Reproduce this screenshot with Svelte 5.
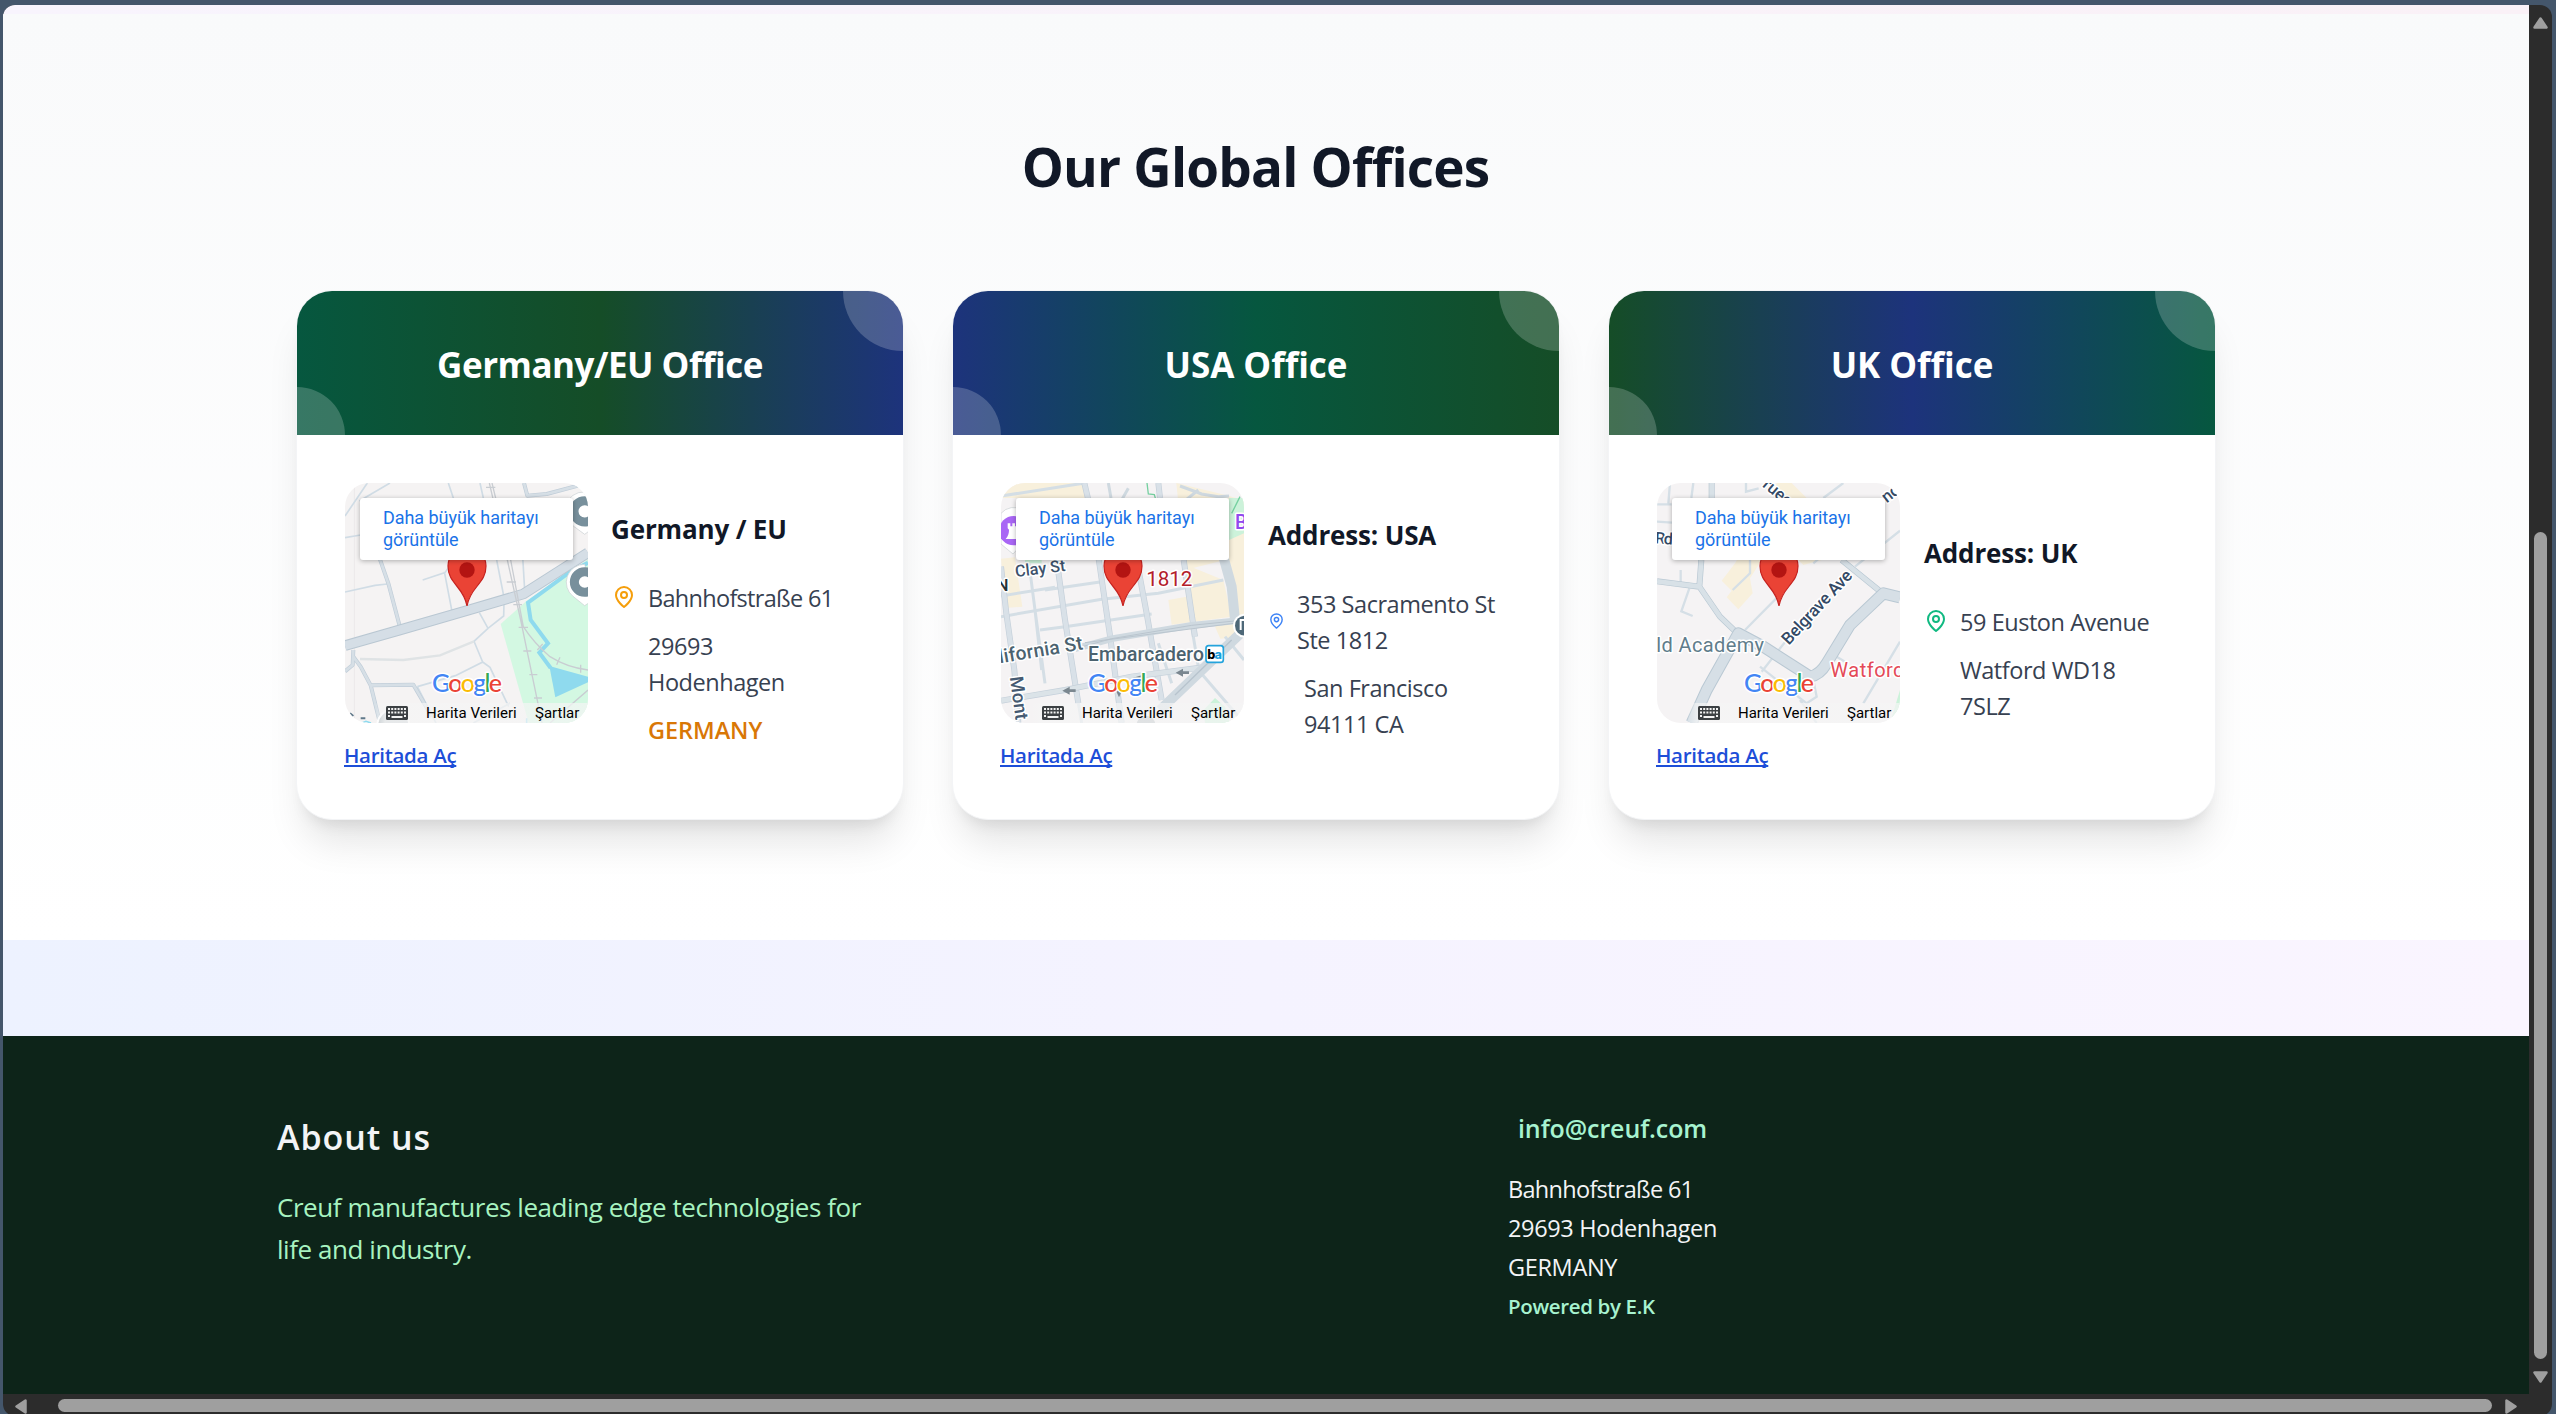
<script>
  const offices = [
    {
      id: 'de', title: 'Germany/EU Office', heading: 'Germany / EU',
      street: ['Bahnhofstraße 61'], city: ['29693', 'Hodenhagen'], country: 'GERMANY'
    },
    {
      id: 'us', title: 'USA Office', heading: 'Address: USA',
      street: ['353 Sacramento St', 'Ste 1812'], city: ['San Francisco', '94111 CA']
    },
    {
      id: 'uk', title: 'UK Office', heading: 'Address: UK',
      street: ['59 Euston Avenue'], city: ['Watford WD18', '7SLZ']
    }
  ];
</script>

{#snippet mapDe()}
  <svg class="tiles" viewBox="45 39 729 720">
    <rect x="45" y="39" width="729" height="720" fill="#f5f3f3" />
    <path d="M73 39V759" stroke="#ebe9ea" stroke-width="3" />
    <path d="M512 462L590 392 774 268V759H596Z" fill="#d3f8e2" />
    <g fill="none" stroke="#d0dce5" stroke-width="5">
      <path d="M45 138L112 39M88 93L180 39M45 203L92 195M45 366L135 346 172 342M278 330L345 308 357 290M343 305L366 424M355 39L372 90M450 39L460 84M498 260L522 382M578 260L584 360M522 400L521 438 474 475 448 428M474 475L432 514 458 576 376 617M458 576L480 592 536 710M376 617L262 650M262 650L318 759M430 759L540 700" />
    </g>
    <path d="M90 567L220 570 330 556 432 514" fill="none" stroke="#dfe3e5" stroke-width="7" />
    <g fill="none" stroke="#c0cdd8" stroke-width="12" stroke-linejoin="round">
      <path d="M150 268L175 340 209 468M582 39L592 77 650 72 774 39M45 604L68 585 70 540M70 560L92 590 122 646 150 759M122 646L250 644 306 740" />
      <path d="M150 268L175 340 209 468M582 39L592 77 650 72 774 39M45 604L68 585 70 540M70 560L92 590 122 646 150 759M122 646L250 644 306 740" stroke="#d6dfe6" stroke-width="8" />
    </g>
    <path d="M774 278L720 306 594 398 602 450 654 520 628 548 662 594" fill="none" stroke="#8fdaee" stroke-width="12" />
    <path d="M658 588L774 620V637L676 682Z" fill="#8fdaee" />
    <g fill="none" stroke-linejoin="round">
      <path d="M45 527L209 480 410 422 580 372 774 248" stroke="#b9c7d2" stroke-width="32" />
      <path d="M45 527L209 480 410 422 580 372 774 248" stroke="#d5dee6" stroke-width="26" />
      <path d="M478 39L532 270 572 450 636 759M486 39L542 270 580 470M580 470Q612 520 660 560 710 592 774 600M660 759L774 660" stroke="#c9cdd2" stroke-width="4" />
      <path d="M468 52h28M530 336h28M550 404h26M566 472h28M580 543h24M598 614h24M612 684h24M690 562l-10 22M752 584v24M638 522l-16 18" stroke="#c9cdd2" stroke-width="4" />
    </g>
    <g fill="#fff" stroke="#c9ced2" stroke-width="2">
      <path d="M764 66a56 56 0 0 0-30 105l30 22 30-22Z" />
      <path d="M764 283a54 54 0 0 0-35 96l35 28 30-20Z" />
    </g>
    <g fill="none" stroke="#78909c" stroke-width="27">
      <circle cx="764" cy="124" r="32" /><circle cx="764" cy="336" r="31" />
    </g>
    <circle cx="190" cy="766" r="48" fill="#c5ccd0" stroke="#fff" stroke-width="6" />
    <path d="M60 730l10 8M92 745h14" stroke="#60798a" stroke-width="6" />
    <path d="M96 759l12-5 15 5M590 745v14" fill="none" stroke="#8fdaee" stroke-width="5" />
  </svg>
{/snippet}

{#snippet mapUs()}
  <svg class="tiles" viewBox="48 39 729 720">
    <rect x="48" y="39" width="729" height="720" fill="#f5f3f4" />
    <g fill="#f8f0dc">
      <path d="M48 39H290L300 84H48ZM48 266L90 262 112 410 62 414ZM592 280L715 330 740 440 560 464 550 390 604 380ZM574 39L700 70 777 90V500L706 506 690 470 740 440 720 270 600 300Z" />
    </g>
    <path d="M732 84H777V190L732 210ZM120 266H170V280H120ZM656 720L690 684 720 710 735 759H660Z" fill="#ccf2da" />
    <path d="M486 39L490 72 508 74 512 88M740 130L765 80" fill="none" stroke="#75d0a0" stroke-width="4" />
    <g fill="none" stroke="#d4dee5" stroke-width="9">
      <path d="M48 78L300 39M48 440L350 388M180 360L350 335M48 378L210 352M150 420L170 600M165 480L240 470 362 452M240 470L500 432M132 280L150 420 180 640M270 640L290 759M350 388L520 370 715 330M520 520L560 640M620 470L640 590M640 600L777 759M720 500L777 570" />
    </g>
    <g fill="none" stroke="#c5d0da" stroke-width="18">
      <path d="M48 290L64 430 88 600 100 759M215 270L240 450 280 700M340 260L374 490 410 759M455 270L485 430 530 690M596 270L630 500M298 39L310 90M520 39L525 84" />
      <path d="M48 290L64 430 88 600 100 759M215 270L240 450 280 700M340 260L374 490 410 759M455 270L485 430 530 690M596 270L630 500M298 39L310 90M520 39L525 84" stroke="#d9e1e8" stroke-width="14" />
      <path d="M48 692L240 660 440 620 655 592" /><path d="M48 692L240 660 440 620 655 592" stroke="#dbe3e8" stroke-width="14" />
    </g>
    <g fill="none" stroke="#cfd9e0">
      <path d="M715 260L740 350 750 450M525 720L640 610 777 480" stroke-width="30" />
      <path d="M270 536L380 506 620 466 777 450" stroke-width="20" />
      <path d="M270 536L380 506 620 466 777 450M300 518L777 456" stroke="#bac5ce" stroke-width="3" />
      <path d="M570 675L740 510" stroke="#b7c3cd" stroke-width="4" />
      <path d="M640 60L600 92M370 39L378 84M430 55L410 90M585 48L650 72 700 80 732 78" stroke-width="9" />
    </g>
    <path d="M232 662l22-12v8h18v8h-18v8ZM572 608l22-12v8h18v8h-18v8ZM402 682l-10-22h20ZM440 625l32-10v14Z" fill="#7b8790" />
    <path d="M48 130a52 52 0 0 1 88 52 52 52 0 0 1-32 48l-20 22-36-30Z" fill="#fff" stroke="#c9ced2" stroke-width="2" />
    <circle cx="86" cy="182" r="44" fill="#a966f5" /><path d="M68 160h8v9h6v-9h8v9h10v38H62c8-10 10-18 10-28l-4-4Z" fill="#fff" />
    <circle cx="780" cy="467" r="36" fill="#fff" /><circle cx="780" cy="467" r="30" fill="#4e6878" /><path d="M777 450h-10v30" fill="none" stroke="#fff" stroke-width="6" />
    <circle cx="483" cy="765" r="28" fill="#adb5ba" />
    <g class="label">
      <text x="92" y="321" font-size="49" transform="rotate(-7 92 321)" textLength="152" fill="#3d526b">Clay St</text>
      <text x="34" y="362" font-size="52" fill="#263238">N</text>
      <text x="44" y="580" font-size="58" transform="rotate(-9.500 44 580)" textLength="255" fill="#4b626f">lifornia St</text>
      <text x="309" y="573" font-size="58" textLength="348" fill="#4b626f">Embarcadero</text>
      <text x="74" y="622" font-size="56" transform="rotate(82 74 622)" fill="#455a72">Mont</text>
      <text x="484" y="347" font-size="62" textLength="138" fill="#b3202a" class="thin">1812</text>
      <text x="750" y="177" font-size="58" fill="#9149ed">B</text>
    </g>
    <rect x="663" y="527" width="52" height="50" rx="8" fill="#fff" stroke="#24a3dc" stroke-width="5" />
    <text x="667" y="567" class="bart">b<tspan fill="#19a0dd">a</tspan></text>
  </svg>
{/snippet}

{#snippet mapUk()}
  <svg class="tiles" viewBox="51 39 729 720">
    <rect x="51" y="39" width="729" height="720" fill="#f5f3f4" />
    <path d="M410 39H455L500 84 545 270 490 285 475 270H365L330 325 338 370 295 418 260 382 275 362 245 332 285 280 400 84Z" fill="#f8f0dc" />
    <path d="M780 660V759H750Z" fill="#ccf2da" />
    <g fill="none" stroke="#d5dfe6" stroke-width="7">
      <path d="M51 103H95M90 39L85 100M160 39L154 84M51 155L96 158M122 300V342M148 355L124 424 158 438M315 480L420 374M610 39L550 84M520 280L690 130M645 290L780 182M440 510L365 605M780 515L670 700M590 560L615 575M330 270V310L278 360M360 590L500 700 530 680 522 640M480 690L530 759M318 39V65L356 55" />
    </g>
    <g fill="none" stroke-linejoin="round">
      <path d="M51 334L178 350 240 440 290 488M178 350L184 270M215 39V84M605 270L728 370" stroke="#b9c8d3" stroke-width="18" />
      <path d="M51 334L178 350 240 440 290 488M178 350L184 270M215 39V84M605 270L728 370" stroke="#d8e1e7" stroke-width="14" />
      <path d="M155 759L200 660 295 490 370 530 510 620Q540 615 560 580L630 465 730 370 780 382" stroke="#b9c8d3" stroke-width="36" />
      <path d="M155 759L200 660 295 490 370 530 510 620Q540 615 560 580L630 465 730 370 780 382" stroke="#d6dfe6" stroke-width="30" />
    </g>
    <g class="label">
      <text x="365" y="48" font-size="50" transform="rotate(40 365 48)" fill="#344a66">ruee</text>
      <text x="740" y="100" font-size="50" transform="rotate(-38 740 100)" fill="#344a66">nd</text>
      <text x="44" y="220" font-size="48" transform="rotate(4 44 220)" textLength="54" fill="#344a66">Rd</text>
      <text x="446" y="527" font-size="51" transform="rotate(-47 446 527)" textLength="284" fill="#344a66">Belgrave Ave</text>
      <text x="49" y="545" font-size="60" class="thin" textLength="323" fill="#607d8b">ld Academy</text>
      <text x="571" y="620" font-size="60" class="thin" letter-spacing="1.500" fill="#e44a58">Watford</text>
    </g>
  </svg>
{/snippet}

<div class="screen">
  <div class="window">
    <div class="viewport">
      <section class="offices">
        <h2>Our Global Offices</h2>
        <div class="grid">
          {#each offices as o (o.id)}
            <article class="card {o.id}">
              <header><h3>{o.title}</h3></header>
              <div class="body">
                <div class="map-col">
                  <div class="map">
                    {#if o.id === 'de'}{@render mapDe()}{:else if o.id === 'us'}{@render mapUs()}{:else}{@render mapUk()}{/if}
                    <svg class="pin" viewBox="0 0 40 62">
                      <path d="M20 61C18.500 53 15.500 48 10.500 42 4.500 34.500 1 30 1 21a19 19 0 0 1 38 0c0 9-3.500 13.500-9.500 21C24.500 48 21.500 53 20 61Z" fill="#ea4335" stroke="#c5221f" stroke-width="1.200" />
                      <circle cx="20" cy="25" r="7.700" fill="#b31412" />
                    </svg>
                    <div class="bubble">Daha büyük haritayı görüntüle</div>
                    <svg class="google" viewBox="0 0 78 40">
                      <text x="3" y="29.500" textLength="70"><tspan fill="#4285f4">G</tspan><tspan fill="#ea4335">o</tspan><tspan fill="#fbbc04">o</tspan><tspan fill="#4285f4">g</tspan><tspan fill="#34a853">l</tspan><tspan fill="#ea4335">e</tspan></text>
                    </svg>
                    <div class="legal">
                      <svg viewBox="0 0 22 14">
                        <rect width="22" height="14" rx="1.500" fill="#3c4043" />
                        <path d="M2 2h2v2H2zM5.200 2h2v2h-2zM8.400 2h2v2h-2zM11.600 2h2v2h-2zM14.800 2h2v2h-2zM18 2h2v2h-2zM2 5.500h2v2H2zM5.200 5.500h2v2h-2zM8.400 5.500h2v2h-2zM11.600 5.500h2v2h-2zM14.800 5.500h2v2h-2zM18 5.500h2v2h-2zM2 9h2v2H2zM18 9h2v2h-2zM5.500 10h11v2h-11z" fill="#f3f3f3" />
                      </svg>
                      <span class="data">Harita Verileri</span><span class="terms">Şartlar</span>
                    </div>
                  </div>
                  <a href="#map-{o.id}">Haritada Aç</a>
                </div>
                <div class="info">
                  <h4>{o.heading}</h4>
                  <div class="street">
                    <svg class="marker" viewBox="0 0 24 24"><path d="M20 10c0 6-8 12-8 12s-8-6-8-12a8 8 0 0 1 16 0Z" /><circle cx="12" cy="10" r="3" /></svg>
                    <div>{#each o.street as line}<div>{line}</div>{/each}</div>
                  </div>
                  <div class="city">{#each o.city as line}<div>{line}</div>{/each}</div>
                  {#if o.country}<div class="country">{o.country}</div>{/if}
                </div>
              </div>
            </article>
          {/each}
        </div>
      </section>
      <div class="band"></div>
      <footer>
        <div class="about">
          <h3>About us</h3>
          <p>Creuf manufactures leading edge technologies for<br />life and industry.</p>
        </div>
        <div class="contact">
          <div class="mail">info@creuf.com</div>
          <div class="street-line">Bahnhofstraße 61</div>
          <div>29693 Hodenhagen</div>
          <div>GERMANY</div>
          <div class="powered">Powered by E.K</div>
        </div>
      </footer>
    </div>
    <div class="vbar">
      <svg viewBox="0 0 15 12"><path d="M7.500 1.500L13.500 10.500H1.500Z" /></svg>
      <div class="vthumb"></div>
      <svg viewBox="0 0 15 12"><path d="M7.500 10.500L1.500 1.500H13.500Z" /></svg>
    </div>
    <div class="hbar">
      <svg viewBox="0 0 12 15"><path d="M1.500 7.500L10.500 1.500V13.500Z" /></svg>
      <div class="hthumb"></div>
      <svg viewBox="0 0 12 15"><path d="M10.500 7.500L1.500 1.500V13.500Z" /></svg>
    </div>
  </div>
</div>

<style>
  :global(body) { background: #44566b; overflow: hidden; }
  * { box-sizing: border-box; }
  h2, h3, h4, p { margin: 0; }
  .screen {
    width: 2556px; height: 1414px; overflow: hidden;
    padding: 5px 4px 0 3px; background: #44566b;
    font-family: "Open Sans", "Noto Sans", sans-serif;
  }
  .window {
    height: 1411px; border-radius: 12px; overflow: hidden; background: #2c2c2c;
    display: grid; grid-template: 1389px 22px / 2526px 23px;
  }
  .viewport { display: flex; flex-direction: column; overflow: hidden; padding-top: 9px; background: linear-gradient(90deg, #f8f4fd, #faf1f7); }

  .offices { height: 926px; padding: 112px 293px 0; background: linear-gradient(#f9fafb, #fff); }
  h2 { height: 81px; line-height: 81px; text-align: center; font-size: 53px; font-weight: 700; letter-spacing: -0.800px; color: #111827; margin-right: 21px; }
  .grid { width: 1920px; margin-top: 83px; display: grid; grid-template-columns: repeat(3, 608px); gap: 48px; }
  .card {
    height: 530px; border: 1px solid #f3f4f6; border-radius: 36px; overflow: hidden; background: #fff;
    box-shadow: 0 30px 37px -8px rgba(0, 0, 0, 0.1), 0 12px 15px -9px rgba(0, 0, 0, 0.1);
  }
  header { position: relative; height: 144px; overflow: hidden; display: flex; align-items: center; justify-content: center; color: #fff; }
  header::before, header::after { content: ""; position: absolute; border-radius: 50%; background: rgba(255, 255, 255, 0.2); }
  header::before { width: 120px; height: 120px; right: -60px; top: -60px; }
  header::after { width: 96px; height: 96px; left: -48px; bottom: -48px; }
  header h3 { font-size: 35px; font-weight: 700; letter-spacing: -0.050px; line-height: 48px; padding-top: 4px; font-variant-ligatures: none; }
  .de header h3 { letter-spacing: -0.5px; }
  .de header { background: linear-gradient(90deg, #06573f, #154d27 50%, #1d337c); }
  .us header { background: linear-gradient(90deg, #1d337c, #06573f 50%, #154d27); }
  .uk header { background: linear-gradient(90deg, #154d27, #1d337c 50%, #06573f); }
  .body { height: 385px; padding: 48px; display: flex; gap: 24px; }

  .map-col { width: 243px; flex: none; }
  .map { position: relative; width: 243px; height: 240px; border-radius: 24px; overflow: hidden; font-family: Roboto, sans-serif; }
  .tiles { display: block; width: 243px; height: 240px; }
  .label text { font-family: Roboto, sans-serif; font-weight: 500; paint-order: stroke; stroke: #fff; stroke-width: 9px; stroke-linejoin: round; }
  .label .thin { font-weight: 400; }
  .bart { font-family: Inter, sans-serif; font-weight: 800; font-size: 38px; letter-spacing: -3px; }
  .pin { position: absolute; left: 102px; top: 62px; width: 40px; height: 62px; }
  .bubble {
    position: absolute; left: 15px; top: 15px; width: 213px; height: 62px; padding: 9px 23px; border-radius: 3px;
    background: #fff; color: #1a73e8; font-size: 18px; line-height: 22px; letter-spacing: -0.050px; box-shadow: 0 1px 5px rgba(0, 0, 0, 0.3);
  }
  .google { position: absolute; left: 84px; top: 179px; width: 78px; height: 40px; overflow: visible; }
  .google text { font-family: Lato, sans-serif; font-size: 25px; font-weight: 500; paint-order: stroke; stroke: #fff; stroke-width: 3px; stroke-linejoin: round; }
  .google tspan { paint-order: stroke; }
  .legal {
    position: absolute; left: 0; right: 0; bottom: 0; height: 20px; display: flex; align-items: center; padding-left: 41px;
    background: linear-gradient(90deg, rgba(245, 245, 245, 0) 30px, rgba(245, 245, 245, 0.7) 40px); color: #000; font-size: 15px; line-height: 20px;
  }
  .legal svg { width: 22px; height: 14px; }
  .data { margin-left: 18px; width: 109px; white-space: nowrap; }
  a { display: block; width: max-content; margin: 17px 0 0 -1px; color: #1d4ed8; font-size: 20.500px; font-weight: 600; line-height: 30px; letter-spacing: -0.300px; text-decoration: underline; text-decoration-thickness: 2px; text-underline-offset: 2px; text-decoration-skip-ink: none; }

  .info { flex: 1; display: flex; flex-direction: column; justify-content: center; gap: 12px; font-size: 23.500px; line-height: 36px; letter-spacing: -0.450px; color: #374151; white-space: nowrap; }
  h4 { font-size: 26px; line-height: 42px; font-weight: 700; letter-spacing: -0.150px; color: #111827; margin-bottom: 18px; }
  .street { display: flex; align-items: center; gap: 12px; }
  .de .street { letter-spacing: -0.700px; }
  .de h4 { margin-left: -1px; }
  .marker { flex: none; width: 24px; height: 24px; margin-bottom: 2px; fill: none; stroke: #f59e0b; stroke-width: 2; stroke-linecap: round; stroke-linejoin: round; }
  .us .marker { width: 17px; stroke: #3b82f6; }
  .uk .marker { stroke: #10b981; }
  .city, .country { padding-left: 36px; }
  .country { color: #d97706; font-weight: 600; letter-spacing: -0.050px; }

  .band { height: 96px; background: linear-gradient(90deg, #edf2ff, #f5f3ff 50%, #faf5ff); }
  footer { height: 358px; background: #0d2419; display: grid; grid-template-columns: 1231px 1fr; padding: 71px 275px 0 274px; }
  .about h3 { color: #f3f4f6; font-size: 34px; font-weight: 600; line-height: 60px; letter-spacing: 0.950px; }
  .about p { margin-top: 19px; color: #a7f3c0; font-size: 26px; line-height: 42px; letter-spacing: -0.440px; }
  .contact { color: #f3f4f6; font-size: 23.500px; line-height: 39px; letter-spacing: -0.350px; }
  .street-line { letter-spacing: -0.700px; }
  .mail { padding-left: 10px; color: #a7f3d0; font-size: 25px; font-weight: 600; line-height: 42px; letter-spacing: -0.100px; margin-bottom: 21px; }
  .powered { color: #a7f3d0; font-size: 20.500px; font-weight: 600; }

  .vbar { display: flex; flex-direction: column; align-items: center; padding-top: 12px; }
  .vbar svg { width: 15px; height: 12px; }
  .vthumb { width: 13px; height: 827px; margin: 503px 0 12px; border-radius: 7px; background: #9f9f9f; }
  .hbar { grid-column: 1 / -1; display: flex; align-items: flex-start; padding: 5px 0 0 12px; }
  .hbar svg { width: 12px; height: 15px; }
  .hthumb { width: 2434px; height: 13px; margin: 0 13px 0 31px; border-radius: 7px; background: #9f9f9f; }
  .vbar path, .hbar path { fill: #9f9f9f; stroke: #9f9f9f; stroke-width: 2.500; stroke-linejoin: round; }
</style>
